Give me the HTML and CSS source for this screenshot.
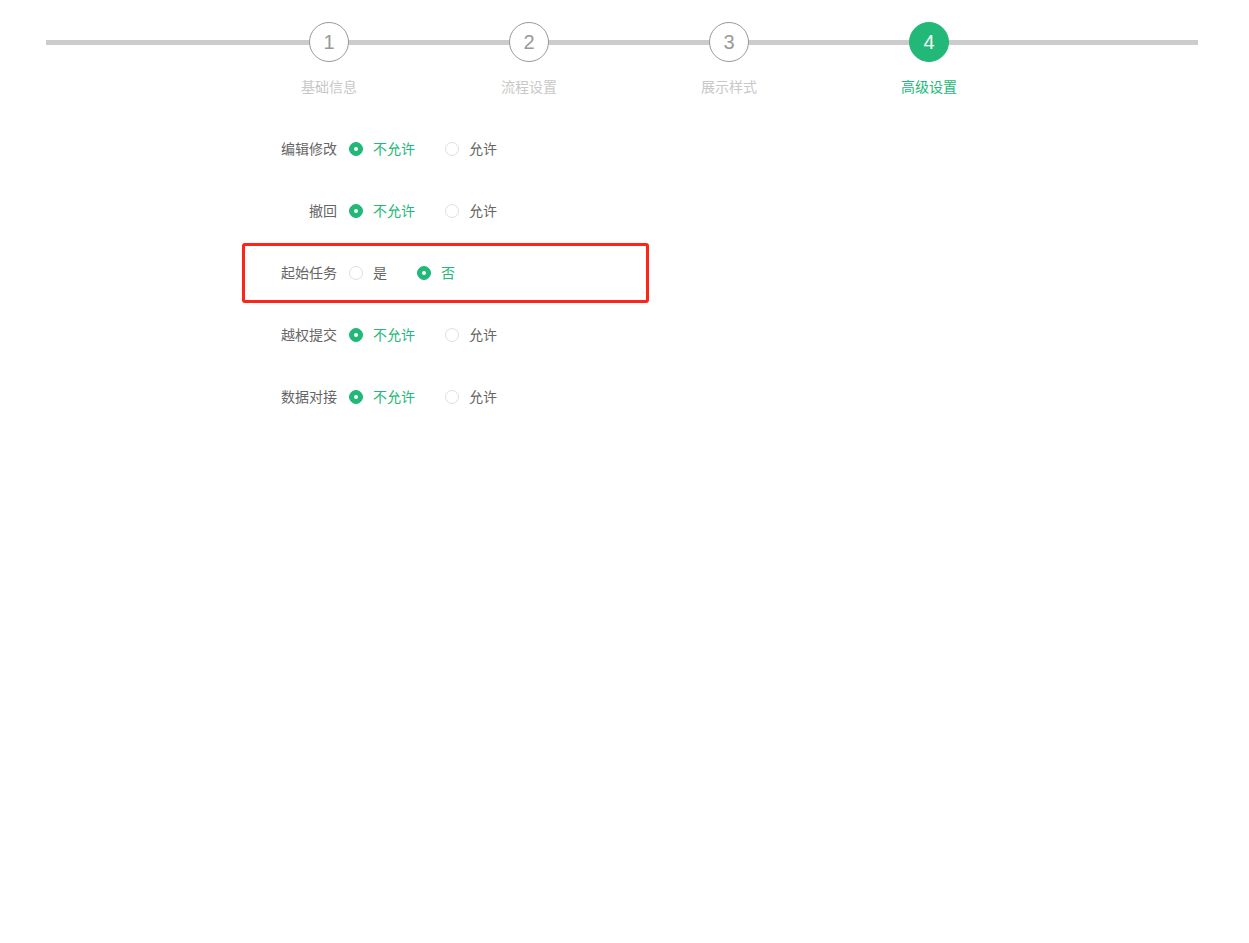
FILE: index.html
```html
<!DOCTYPE html>
<html lang="zh-CN">
<head>
    <meta charset="UTF-8">
    <meta name="viewport" content="width=device-width, initial-scale=1.0">
    <title>高级设置</title>
    <link rel="stylesheet" href="styles.css">
</head>
<body>
    <div class="steps">
        <div class="step">
            <div class="step-num">1</div>
            <div class="step-title">基础信息</div>
        </div>
        <div class="step">
            <div class="step-num">2</div>
            <div class="step-title">流程设置</div>
        </div>
        <div class="step">
            <div class="step-num">3</div>
            <div class="step-title">展示样式</div>
        </div>
        <div class="step active">
            <div class="step-num">4</div>
            <div class="step-title">高级设置</div>
        </div>
    </div>

    <div class="form">
        <div class="form-row">
            <div class="form-label">编辑修改</div>
            <label class="radio checked"><span class="dot"></span>不允许</label>
            <label class="radio"><span class="dot"></span>允许</label>
        </div>
        <div class="form-row">
            <div class="form-label">撤回</div>
            <label class="radio checked"><span class="dot"></span>不允许</label>
            <label class="radio"><span class="dot"></span>允许</label>
        </div>
        <div class="form-row marked">
            <div class="form-label">起始任务</div>
            <label class="radio"><span class="dot"></span>是</label>
            <label class="radio checked"><span class="dot"></span>否</label>
        </div>
        <div class="form-row">
            <div class="form-label">越权提交</div>
            <label class="radio checked"><span class="dot"></span>不允许</label>
            <label class="radio"><span class="dot"></span>允许</label>
        </div>
        <div class="form-row">
            <div class="form-label">数据对接</div>
            <label class="radio checked"><span class="dot"></span>不允许</label>
            <label class="radio"><span class="dot"></span>允许</label>
        </div>
    </div>
</body>
</html>
```

FILE: styles.css
```css
body {
    margin: 0;
    padding: 0;
    background: #fff;
    font-family: "Noto Sans CJK SC", "Noto Sans", sans-serif;
    font-size: 14px;
    color: #666;
}
.steps {
    position: relative;
    display: flex;
    margin: 22px 51px 0 46px;
    padding-left: 183px;
}
.steps::before {
    content: "";
    position: absolute;
    left: 0;
    right: 0;
    top: 18px;
    height: 5px;
    background: #cccccc;
}
.step {
    width: 200px;
    display: flex;
    flex-direction: column;
    align-items: center;
    position: relative;
}
.step-num {
    width: 38px;
    height: 38px;
    border: 1px solid #999;
    border-radius: 50%;
    background: #fff;
    color: #999;
    font-family: "Liberation Sans", Arial, sans-serif;
    font-size: 20px;
    line-height: 38px;
    text-align: center;
}
.step-title {
    margin-top: 14px;
    font-size: 14px;
    line-height: 20px;
    color: #c8c8c8;
}
.step.active .step-num {
    background: #21b878;
    border-color: #21b878;
    color: #fff;
}
.step.active .step-title {
    color: #21b878;
}
.form {
    margin-top: 21px;
    margin-left: 245px;
}
.form-row {
    position: relative;
    display: flex;
    align-items: center;
    height: 62px;
}
.form-row.marked::after {
    content: "";
    position: absolute;
    left: -3px;
    top: 2px;
    width: 401px;
    height: 54px;
    border: 3px solid #ff2318;
    border-radius: 3px;
}
.form-label {
    width: 92px;
    padding-right: 12px;
    text-align: right;
    line-height: 20px;
}
.radio {
    display: flex;
    align-items: center;
    margin-right: 30px;
    line-height: 20px;
    cursor: pointer;
}
.dot {
    box-sizing: border-box;
    width: 14px;
    height: 14px;
    margin-top: 1px;
    margin-right: 10px;
    border: 1px solid #dcdfe6;
    border-radius: 50%;
    background: #fff;
    position: relative;
}
.radio.checked {
    color: #21b878;
}
.radio.checked .dot {
    background: #21b878;
    border-color: #21b878;
}
.radio.checked .dot::after {
    content: "";
    position: absolute;
    left: 50%;
    top: 50%;
    width: 4px;
    height: 4px;
    margin: -2px 0 0 -2px;
    border-radius: 50%;
    background: #fff;
}
```
